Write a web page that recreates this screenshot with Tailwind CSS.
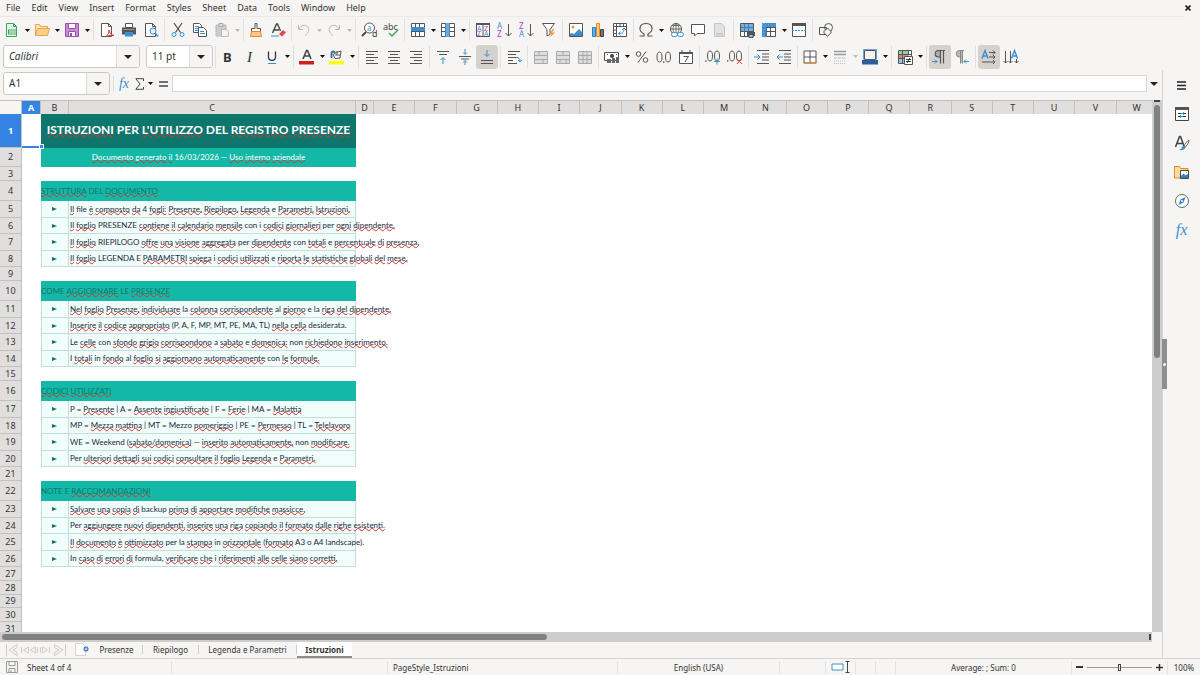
<!DOCTYPE html>
<html lang="en">
  <head>
    <meta charset="UTF-8" />
    <meta name="viewport" content="width=device-width, initial-scale=1.0" />
    <title>Registro presenze - Istruzioni</title>
    <script src="https://cdn.jsdelivr.net/npm/@tailwindcss/browser@4"></script>
  </head>
  <body class="flex h-screen flex-col overflow-hidden bg-[#f6f5f4] font-['Noto_Sans',sans-serif] text-[9px] text-[#333]">
    <!-- Menu bar -->
    <nav class="mr-4 flex h-[17px] shrink-0 items-center gap-[11px] border-b border-[#ebe9e7] pl-[6px]">
      <a href="#">File</a>
      <a href="#">Edit</a>
      <a href="#">View</a>
      <a href="#">Insert</a>
      <a href="#">Format</a>
      <a href="#">Styles</a>
      <a href="#">Sheet</a>
      <a href="#">Data</a>
      <a href="#">Tools</a>
      <a href="#">Window</a>
      <a href="#">Help</a>
      <button class="-mr-3 ml-auto grid size-4 place-items-center" aria-label="Close document">
        <svg class="size-[6px]" viewBox="0 0 6 6" stroke="#222" stroke-width="1.6"><path d="M.5.5l5 5M5.5.5l-5 5" /></svg>
      </button>
    </nav>

    <!-- Standard toolbar -->
    <div id="standard" class="flex h-[26px] shrink-0 items-center pl-px" role="toolbar" aria-label="Standard"></div>

    <!-- Formatting toolbar -->
    <div class="flex h-[27px] shrink-0 items-center pl-[3px]" role="toolbar" aria-label="Formatting">
      <div class="mr-[6px] flex h-[23px] w-[137px] overflow-hidden rounded-[3px] border border-[#cdc7c2] bg-white">
        <input class="min-w-0 flex-1 px-[5px] text-[10px] italic outline-none" value="Calibri" aria-label="Font name" />
        <button class="grid w-[23px] place-items-center border-l border-[#dcd8d4] bg-[#f6f5f4]" aria-label="Font list">
          <svg class="h-[4px] w-[8px]" viewBox="0 0 8 4"><path d="M0 0h8L4 4z" fill="#222" /></svg>
        </button>
      </div>
      <div class="flex h-[23px] w-[67px] overflow-hidden rounded-[3px] border border-[#cdc7c2] bg-white">
        <input class="min-w-0 flex-1 px-[5px] text-[10px] outline-none" value="11 pt" aria-label="Font size" />
        <button class="grid w-[23px] place-items-center border-l border-[#dcd8d4] bg-[#f6f5f4]" aria-label="Font size list">
          <svg class="h-[4px] w-[8px]" viewBox="0 0 8 4"><path d="M0 0h8L4 4z" fill="#222" /></svg>
        </button>
      </div>
      <div id="formatting" class="flex items-center"></div>
    </div>

    <div class="flex min-h-0 flex-1">
      <main class="flex min-w-0 flex-1 flex-col">
        <!-- Formula bar -->
        <div class="flex h-[30px] shrink-0 items-center pb-[3px] pl-[3px]">
          <div class="flex h-[23px] w-[107px] overflow-hidden rounded-[3px] border border-[#cdc7c2] bg-white">
            <input class="min-w-0 flex-1 px-[5px] text-[10px] outline-none" value="A1" aria-label="Name box" />
            <button class="grid w-[23px] place-items-center border-l border-[#dcd8d4] bg-[#f6f5f4]" aria-label="Cell ranges">
              <svg class="h-[4px] w-[8px]" viewBox="0 0 8 4"><path d="M0 0h8L4 4z" fill="#222" /></svg>
            </button>
          </div>
          <div class="ml-[3px] h-4 w-[3px] border-l border-[#dedbd8]"></div>
          <button class="w-[16px] text-center font-['Liberation_Serif',serif] text-[14px] leading-4 text-[#3a8fd0] italic" aria-label="Function wizard">fx</button>
          <button class="grid h-6 w-[14px] place-items-center" aria-label="Select function">
            <svg class="h-3 w-[9px]" viewBox="0 0 9 12" fill="none" stroke="#444"><path d="M8.500 3V.7H.8L5 6 .8 11.300h7.700V9" /></svg>
          </button>
          <button class="grid h-6 w-2 place-items-center" aria-label="Function list">
            <svg class="h-[3px] w-[5px]" viewBox="0 0 5 3"><path d="M0 0h5L2.500 3z" fill="#111" /></svg>
          </button>
          <button class="grid h-6 w-[18px] place-items-center" aria-label="Formula">
            <svg class="h-[6px] w-[9px]" viewBox="0 0 9 6" stroke="#444" stroke-width="1.400"><path d="M0 1h9M0 5h9" /></svg>
          </button>
          <input class="h-[17px] min-w-0 flex-1 border border-[#dad6d2] bg-white px-1 text-[10px] outline-none" aria-label="Input line" />
          <button class="-ml-px mr-px grid w-[15px] place-items-center" aria-label="Expand formula bar">
            <svg class="h-[4px] w-[8px]" viewBox="0 0 8 4"><path d="M0 0h8L4 4z" fill="#222" /></svg>
          </button>
        </div>

        <!-- Sheet -->
        <div class="flex min-h-0 flex-1">
          <div class="min-w-0 flex-1 overflow-hidden bg-white">
            <table class="w-[calc(100%+6px)] table-fixed border-separate border-spacing-0 [&_u]:decoration-[#d8302a] [&_u]:decoration-wavy [&_u]:decoration-1 [&_u]:underline-offset-[-1px] [&_u]:[text-decoration-skip-ink:none]">
              <thead>
                <tr id="columns" class="h-[14px]"></tr>
              </thead>
              <tbody id="rows"></tbody>
            </table>
          </div>
          <div class="w-[10px] shrink-0 bg-[#cdcdcd] px-[2px]">
            <div class="mb-[3px] h-[2px] bg-[#444]"></div>
            <div class="h-[47.500%] rounded-full bg-[#7f8180]"></div>
          </div>
        </div>
        <div class="mr-[10px] flex h-[10px] shrink-0 items-center justify-between bg-[#cdcdcd] pl-[2px]">
          <div class="h-[6px] w-[47.400%] rounded-full bg-[#7f8180]"></div>
          <div class="mr-[1px] h-[6px] w-[2px] bg-[#444]"></div>
        </div>

        <!-- Sheet tabs -->
        <div class="flex h-[16px] shrink-0 items-start text-[8px]">
          <svg class="mt-[2px] ml-[6px] h-[12px] w-[60px]" viewBox="0 0 60 12" fill="none" stroke="#cfccc9">
            <path d="M.5 0v12M11 .5L3 6l8 5.500M11 .5v3L7 6l4 2.500v3M15.500 3v6M22.500 3l-5 3 5 3zM29.500 3l-5 3 5 3zM31.500 3v6M36.500 3l5 3-5 3zM34.500 3v6M43.500 3v6M48.500 .5L57 6l-8.500 5.500M48.500 .5v3L53 6l-4.500 2.500v3M59.500 0v12" />
          </svg>
          <button class="ml-[8px] grid h-[15px] w-[15px] place-items-center" aria-label="Add sheet">
            <svg class="h-[13px] w-[14px]" viewBox="0 0 14 13"><path d="M.5.500h7l3 3v9H.5z" fill="#fff" stroke="#d6d3d0" /><circle cx="11" cy="6" r="2.500" fill="#3273bf" /><path d="M11 4.500v3M9.500 6h3" stroke="#fff" stroke-width=".8" /></svg>
          </button>
          <a href="#" class="mt-[3px] ml-[2px] w-[52px] border-r border-[#cfccc9] text-center leading-[9px]">Presenze</a>
          <a href="#" class="mt-[3px] w-[56px] border-r border-[#cfccc9] text-center leading-[9px]">Riepilogo</a>
          <a href="#" class="mt-[3px] w-[98px] border-r border-[#cfccc9] text-center leading-[9px]">Legenda e Parametri</a>
          <a href="#" class="h-full w-[55px] border-b-2 border-[#8b8d8c] bg-white pt-[3px] text-center leading-[9px] font-bold" aria-current="page">Istruzioni</a>
        </div>
      </main>

      <!-- Sidebar -->
      <aside class="relative flex w-[38px] shrink-0 flex-col items-center gap-[5px] border-l border-[#d6d3d0] pt-[3px]">
        <button class="absolute top-[269px] -left-px grid h-[50px] w-[5px] place-items-center bg-[#8d8f8e]" aria-label="Collapse sidebar">
          <span class="size-[3px] rounded-full bg-white"></span>
        </button>
        <button class="grid size-6 place-items-center" aria-label="Sidebar settings">
          <svg class="h-[9px] w-[9px]" viewBox="0 0 9 9" stroke="#222" stroke-width="1.300"><path d="M0 1h9M0 4.500h9M0 8h9" /></svg>
        </button>
        <button class="grid size-6 place-items-center" aria-label="Properties">
          <svg class="size-4" viewBox="0 0 16 16" fill="none"><path d="M1.500 1.500h13v13h-13z" fill="#fff" stroke="#444" /><path d="M1 1h14v3H1z" fill="#555" /><path d="M4 7.500h3M9 7.500h3M4 10.500h2M8 10.500h4" stroke="#333" /><path d="M7 7.500h3M6 10.500h3M9.500 6v3M6.500 9v3" stroke="#3a8fd0" /></svg>
        </button>
        <button class="grid size-6 place-items-center" aria-label="Styles">
          <svg class="size-4" viewBox="0 0 16 16" fill="none"><path d="M1.500 12L5.500 1.500h1L10 11M3 8.500h6" stroke="#444" stroke-width="1.500" /><path d="M15 5c-2 1-4 4-5 6l1.500 1C13 10 15 8 15 5z" fill="#fff" stroke="#666" /><path d="M10.500 11c-2-.5-3 1-3 2.500L5 15c3 .5 6 0 6.500-3z" fill="#3a8fd0" /></svg>
        </button>
        <button class="grid size-6 place-items-center" aria-label="Gallery">
          <svg class="size-4" viewBox="0 0 16 16" fill="none"><path d="M.5 14V2.500h5l1 2H14V14z" fill="#fbd9a5" stroke="#e58a25" /><path d="M6.500 6.500h8v8h-8z" fill="#fff" stroke="#444" /><path d="M7 14v-2l2.500-2.500 2 2L13 10l1 1v3z" fill="#2f7fc9" /><path d="M12 8h1v1h-1z" fill="#e58a25" /></svg>
        </button>
        <button class="grid size-6 place-items-center" aria-label="Navigator">
          <svg class="size-4" viewBox="0 0 16 16" fill="none"><circle cx="8" cy="8" r="6.500" fill="#fff" stroke="#666" /><path d="M11.500 4L9.500 9.500 4.500 12 6.500 6.500z" fill="#2f7fc9" /><circle cx="8" cy="8" r="1" fill="#fff" /></svg>
        </button>
        <button class="size-6 font-['Liberation_Serif',serif] text-[16px] leading-5 text-[#3a8fd0] italic" aria-label="Functions">fx</button>
      </aside>
    </div>

    <!-- Status bar -->
    <footer class="flex h-[17px] shrink-0 items-center border-t border-[#d6d3d0] text-[8px] leading-[13px] [&>div]:h-[13px] [&>div+div]:border-l [&>div+div]:border-[#e4e1de]">
      <div class="flex w-[171px] items-center">
        <svg class="mr-[9px] ml-[6px] size-3" viewBox="0 0 12 12" fill="none" stroke="#999"><path d="M.5.500h11v11H.5zM3 .5v4h6v-4M3 11.500v-4h6v4M5 9v2" /></svg>
        Sheet 4 of 4
      </div>
      <div class="w-[216px]"></div>
      <div class="w-[230px] pl-[5px]">PageStyle_Istruzioni</div>
      <div class="w-[162px] text-center">English (USA)</div>
      <div class="w-[46px]"></div>
      <div class="flex w-[30px] items-center justify-center">
        <svg class="h-[12px] w-[20px]" viewBox="0 0 20 12" fill="none"><path d="M1 3h11v6H1z" fill="#fff" stroke="#3f91c4" /><path d="M14.500.5h4M14.500 11.500h4M16.500.5v11" stroke="#444" /></svg>
      </div>
      <div class="w-[20px]"></div>
      <div class="w-[20px]"></div>
      <div class="min-w-0 flex-1 text-center">Average: ; Sum: 0</div>
      <div class="flex w-[96px] items-center justify-center gap-[3px]">
        <button class="grid size-[9px] place-items-center" aria-label="Zoom out"><span class="h-[2px] w-[7px] bg-[#333]"></span></button>
        <input type="range" class="h-[9px] w-[65px] appearance-none bg-[linear-gradient(#999,#999)] bg-[length:100%_1px] bg-center bg-no-repeat [&::-webkit-slider-thumb]:h-[7px] [&::-webkit-slider-thumb]:w-[3px] [&::-webkit-slider-thumb]:appearance-none [&::-webkit-slider-thumb]:border [&::-webkit-slider-thumb]:border-[#444] [&::-webkit-slider-thumb]:bg-[#eee]" aria-label="Zoom" />
        <button class="grid size-[9px] place-items-center" aria-label="Zoom in">
          <svg class="size-[7px]" viewBox="0 0 7 7" stroke="#333" stroke-width="1.500"><path d="M0 3.500h7M3.500 0v7" /></svg>
        </button>
      </div>
      <div class="w-[33px] text-center">100%</div>
    </footer>

    <script>
      const dark = 'stroke="#555"';
      const blue = 'stroke="#3a8fd0"';
      const grey = 'stroke="#bbb"';
      const page = '<path d="M2.500 1.500h7l3 3v10h-10z" fill="#fff" stroke="#555"/><path d="M9.500 1.500v3h3" stroke="#555"/>';
      const grid = '<path d="M1.500 1.500h13v13h-13z" fill="#fff"/><path d="M1.500 1.500h13v13h-13zM1.500 5.500h13M1.500 9.500h13M5.500 1.500v13M9.500 1.500v13" stroke="#555"/>';
      const letter = (x, y, size, color, t) =>
        `<text x="${x}" y="${y}" font-size="${size}" fill="${color}" font-family="Noto Sans">${t}</text>`;

      // "|" and "¦" are separators, "v" a drop-down arrow, "x" a disabled arrow
      const standard = [
        ["New", '<path d="M2.500 1.500h7l3 3v10h-10z" fill="#e6f5ea" stroke="#3aa757"/><path d="M9.500 1.500v3h3" stroke="#3aa757"/><path d="M4 7.500h9v5H4z" fill="#3aa757"/><path d="M5 9h7M5 11h7" stroke="#fff"/>'], "v",
        ["Open", '<path d="M1.500 13.500v-11h4l1 2h7v2" fill="#fde3b8" stroke="#e8a44a"/><path d="M1.500 13.500l2-7h12l-2 7z" fill="#fbd08b" stroke="#e8a44a"/>'], "v",
        ["Save", '<path d="M1.500 1.500h13v13h-13z" fill="#c88bd6" stroke="#9a4fb0"/><path d="M4.500 1.500h7v5h-7z" fill="#fff" stroke="#9a4fb0"/><path d="M4.500 9.500h7v5h-7z" fill="#fff" stroke="#9a4fb0"/><path d="M6 11h2v3H6z" fill="#9a4fb0"/>'], "v", "|",
        ["Export as PDF", page + '<path d="M7 14.500c2-1.500 3-3.500 3-6.500.5 3 2 5 5 5.500-3-.5-5 0-8 1z" fill="#fff" stroke="#d9383c"/>'],
        ["Print", '<path d="M4.500 1.500h7v4h-7z" fill="#fff" stroke="#555"/><path d="M1 5.500h14v7H1z" fill="#555"/><path d="M4 10h8v4.500H4z" fill="#3a8fd0"/><path d="M2.500 7.500h11" stroke="#999"/>'],
        ["Print preview", page + '<circle cx="10" cy="9" r="3" fill="#e4f1fb" stroke="#3a8fd0"/><path d="M12 11l3 3.500" stroke="#3a8fd0" stroke-width="1.500"/>'], "|",
        ["Cut", `<path d="M4 1l6.500 9.500M12 1L5.500 10.500" ${dark} stroke-width="1.300"/><circle cx="4" cy="12.500" r="2" ${blue}/><circle cx="12" cy="12.500" r="2" ${blue}/>`],
        ["Copy", '<path d="M1.500 1.500h6l2 2v7h-8z" fill="#fff" stroke="#555"/><path d="M6.500 5.500h5l3 3v6h-8z" fill="#fff" stroke="#555"/><path d="M3 4.500h4M3 6.500h3M3 8.500h3M8 9.500h4M8 11.500h5" stroke="#3a8fd0"/>'],
        ["Paste", '<path d="M2 3h10v11H2z" fill="#ccc" stroke="#bbb"/><path d="M5 1.500h4v3H5z" fill="#ddd" stroke="#aaa"/><path d="M7.500 7.500h5l2 2v5h-7z" fill="#f4f4f4" stroke="#bbb"/>'], "x", "¦",
        ["Clone formatting", '<path d="M7 1.500h2v5h3.500v3h-9v-3H7z" fill="#fff" stroke="#555"/><path d="M3.500 9.500h9l1 5h-11z" fill="#fbc98b" stroke="#e58a25"/>'],
        ["Clear formatting", '<path d="M2.500 11L6.500 2h1l3 7M4 8h5" stroke="#444" stroke-width="1.400"/><path d="M9 12l4-4 3 2.500-4 4z" fill="#e04a4a"/><path d="M1 14h8" stroke="#3a8fd0"/>'], "¦",
        ["Undo", `<path d="M2.500 3v4.500H7M3 7c2-4 6-5 9-2 2 3 0 6-3 9" ${grey}/>`], "x",
        ["Redo", `<path d="M13.500 3v4.500H9M13 7c-2-4-6-5-9-2-2 3 0 6 3 9" ${grey}/>`], "x", "|",
        ["Find and replace", `<circle cx="8.500" cy="6" r="5" fill="#fff" ${dark}/><path d="M5 10l-4 4" stroke="#444" stroke-width="1.800"/>` + letter(6, 9, 8, "#3a8fd0", "a") + letter(11, 15, 9, "#444", "d")],
        ["Spelling", letter(0, 8, 9, "#444", "abc") + '<path d="M6 11l3 3 6-6" stroke="#35a85a" stroke-width="1.400"/>'], "|",
        ["Row", grid + '<path d="M1 5h14v4H1z" fill="#3a8fd0"/>'], "v",
        ["Column", grid + '<path d="M5.500 1h4v14h-4z" fill="#62b0ea"/>'], "v", "|",
        ["Sort", '<path d="M1.500 1.500h13v13h-13zM8 1.500v13" fill="#fff" stroke="#555"/><path d="M1 1h14v2H1z" fill="#555"/>' + letter(2, 9, 7, "#3a8fd0", "A") + letter(2, 14, 7, "#a33fb8", "Z") + letter(9, 9, 7, "#a33fb8", "Z") + letter(9, 14, 7, "#3a8fd0", "A")],
        ["Sort ascending", letter(0, 7, 8, "#3a8fd0", "A") + letter(0, 15, 8, "#a33fb8", "Z") + `<path d="M11.500 2v12M8.500 11l3 3 3-3" ${dark}/>`],
        ["Sort descending", letter(0, 7, 8, "#a33fb8", "Z") + letter(0, 15, 8, "#3a8fd0", "A") + `<path d="M11.500 2v12M8.500 11l3 3 3-3" ${dark}/>`],
        ["AutoFilter", `<path d="M1.500 1.500h12L9 7.500v5l-3 1.500V7.500z" fill="#fff" ${dark}/><path d="M12 7l-4 5h2.500L9 15.500l5-5h-3L13.500 7z" fill="#f0983a"/>`], "|",
        ["Insert image", '<path d="M1.500 1.500h13v13h-13z" fill="#fff" stroke="#555"/><circle cx="5" cy="5" r="1.500" fill="#f0983a"/><path d="M2 14v-2l2-1 2 1 5-5 3 3v4z" fill="#3a8fd0"/>'],
        ["Insert chart", '<path d="M2.500 5.500h3v9h-3z" fill="#62b0ea" stroke="#2f7fc9"/><path d="M6.500 1.500h3v13h-3z" fill="#fbc98b" stroke="#e58a25"/><path d="M10.500 7.500h3v7h-3z" fill="#777" stroke="#444"/>'],
        ["Insert pivot table", '<path d="M1.500 1.500h13v13h-13z" fill="#fff" stroke="#555"/><path d="M1.500 4.500h13M4.500 1.500v13M8 1.500v3M11.500 1.500v3M1.500 8h3M1.500 11.500h3" stroke="#555"/><path d="M7 11.500c4 0 5-1 5-5M10 8l2-2 2 2M8.500 9.500l-2 2 2 2" stroke="#3a8fd0"/>'], "¦",
        ["Special character", `<path d="M1.500 14H6v-2C-1 8 2 1.500 8 1.500s9 6.500 2 10.500v2h4.500" ${dark} stroke-width="1.200"/>`], "v",
        ["Hyperlink", `<circle cx="8" cy="7" r="5.500" ${dark}/><path d="M2.500 7h11M8 1.500v11M4 3.500h8M8 1.500c-4 3-4 8 0 11M8 1.500c4 3 4 8 0 11" ${dark} stroke-width=".8"/><rect x="3.500" y="10.500" width="6" height="4" rx="2" fill="#fff" ${blue}/><rect x="9.500" y="10.500" width="6" height="4" rx="2" fill="#fff" ${blue}/>`],
        ["Comment", `<path d="M1.500 2.500h13v9H7L4.500 14v-2.500h-3z" fill="#fff" ${dark}/>`],
        ["Headers and footers", '<path d="M2.500 1.500h7l3 3v10h-10z" fill="#e2e2e2" stroke="#c4c4c4"/><path d="M4 11.500h7M4 13h7" stroke="#c4c4c4"/>'], "|",
        ["Define print area", grid + '<path d="M2 2h12v7H2z" fill="#3a8fd0" fill-opacity=".7"/><path d="M8 10h8v4H8z" fill="#555"/><path d="M10 12.500h4v3h-4z" fill="#8cc6f2" stroke="#555"/>'],
        ["Freeze", grid + '<path d="M1 1h14v4H5.500v10H1z" fill="#3a8fd0"/><path d="M3 1v13M1 3h13" stroke="#9bd" stroke-dasharray="1 2"/>'], "v",
        ["Split window", `<path d="M1.500 1.500h13v13h-13z" fill="#fff" ${dark}/><path d="M1 1h14v3H1z" fill="#555"/><path d="M1 8.500h14" ${blue} stroke-dasharray="2 1"/>`], "|",
        ["Draw functions", `<circle cx="10.500" cy="5.500" r="4" ${dark}/><path d="M1.500 5.500h7v7h-7z" ${dark}/><path d="M9.500 6l4 4-4 4.500-4-4.500z" fill="#f6f5f4" ${dark}/>`],
      ];

      const pilcrow = "M13 1.500H6.500a3 3 0 0 0 0 6.500H8M8.500 1.500v13M11.500 1.500v13";
      const lines = (d) => `<path d="${d}" ${dark} stroke-width="1.200"/>`;
      const merge = (d) => `<path d="M1.500 2.500h13v12h-13z" fill="#ddd"/><path d="M1.500 2.500h13v12h-13zM1.500 6.500h13M1.500 10.500h13${d}" stroke="#aaa"/>`;
      const formatting = [
        "¦",
        ["Bold", '<text x="3" y="13" font-size="13" font-weight="700" fill="#333" font-family="Noto Sans">B</text>'],
        ["Italic", '<text x="5" y="13" font-size="15" font-style="italic" fill="#333" font-family="Liberation Serif">I</text>'],
        ["Underline", '<path d="M4.500 2.500V8c0 4.500 7 4.500 7 0V2.500" stroke="#333" stroke-width="1.300"/><path d="M4 14.500h8" stroke="#3a8fd0"/>'], "v", "|",
        ["Font color", '<path d="M4 10L7.500 1.500h1L12 10M5.500 7h5" stroke="#444" stroke-width="1.600"/><path d="M0 12h15v3.500H0z" fill="#c9211e"/>'], "v",
        ["Background color", '<path d="M2.500 9V4c0-2 3-2 3.500 0" stroke="#2f6fa8" stroke-width="1.800"/><path d="M7.500 3.500L12 2l-1 7-5 .5-2-4z" fill="#fff" stroke="#555"/><path d="M8 2v4M6 6h5" stroke="#555"/><path d="M0 12h15v3.500H0z" fill="#ff0"/>'], "v", "|",
        ["Align left", lines("M2 2.500h12M2 5.500h8M2 8.500h12M2 11.500h8M2 14.500h12")],
        ["Center", lines("M2 2.500h12M4 5.500h8M2 8.500h12M4 11.500h8M2 14.500h12")],
        ["Align right", lines("M2 2.500h12M6 5.500h8M2 8.500h12M6 11.500h8M2 14.500h12")], "|",
        ["Align top", lines("M2 2.500h12M4 5.500h8") + `<path d="M8 15V9M5.500 11L8 8.500l2.500 2.500" ${blue}/>`],
        ["Center vertically", lines("M2 7.500h12M4 10h8") + `<path d="M8 0v5M6 3.500l2 2 2-2M8 16v-4M6 13.500l2-2 2 2" ${blue}/>`],
        ["Align bottom", lines("M2 11.500h12M2 14.500h12") + `<path d="M8 1v6M5.500 5L8 7.500 10.500 5" ${blue}/>`, 1], "|",
        ["Wrap text", lines("M2 2.500h12M2 5.500h8M2 8.500h10M2 11.500h5M2 14.500h9") + `<path d="M10 8.500c3 0 4 1 4 4M12 11l2 2 2-2" ${blue}/>`], "|",
        ["Merge and center", merge("M6 2.500v4M10 10.500v4")],
        ["Merge cells", merge("M8 2.500v4M5 10.500v4M11 10.500v4")],
        ["Split cells", merge("M6 2.500v12M10 2.500v12")], "|",
        ["Currency", '<path d="M.5 3.500h14v8H.5z" fill="#fff" stroke="#555"/><circle cx="8" cy="7" r="2" fill="#444"/><path d="M3 5.500h1M12 5.500h1" stroke="#555"/><path d="M3 10h4v4H3zM8 9h3v5H8zM12 8h3v6h-3z" fill="#666"/>'], "v",
        ["Percent", `<circle cx="4.500" cy="5" r="2.300" ${dark}/><circle cx="11.500" cy="11" r="2.300" ${dark}/><path d="M12 2.500L4 13.500" ${dark}/>`],
        ["Number", `<ellipse cx="3.500" cy="8" rx="2.500" ry="5" ${dark}/><ellipse cx="12" cy="8" rx="2.500" ry="5" ${dark}/><path d="M7.800 12v2" ${dark}/>`],
        ["Date", `<path d="M1.500 3.500h13v11h-13z" fill="#fff" ${dark}/><path d="M1 3h14v2H1zM3.500 1h1v3h-1zM11.500 1h1v3h-1z" fill="#555"/><path d="M5.500 7.500h5L7 13" ${dark}/>`], "|",
        ["Add decimal place", `<ellipse cx="5" cy="7" rx="2.500" ry="5" ${dark}/><ellipse cx="12" cy="7" rx="2.500" ry="5" ${dark}/><path d="M.8 11v2" ${dark}/><path d="M12 9.500v6M9 12.500h6" ${blue}/>`],
        ["Delete decimal place", `<ellipse cx="5" cy="7" rx="2.500" ry="5" ${dark}/><ellipse cx="12" cy="7" rx="2.500" ry="5" ${dark}/><path d="M.8 11v2" ${dark}/><path d="M10 10l5 5M15 10l-5 5" stroke="#e03c3c"/>`], "|",
        ["Increase indent", lines("M3 1.500h12M8 5h7M8 8h7M8 11h7M3 14.500h12") + `<path d="M0 8h6M3.500 5.500L6 8l-2.500 2.500" ${blue}/>`],
        ["Decrease indent", lines("M3 1.500h12M8 5h7M8 8h7M8 11h7M3 14.500h12") + `<path d="M1 8h6M3.500 5.500L1 8l2.500 2.500" ${blue}/>`], "¦",
        ["Borders", `<path d="M2 2h12v12H2zM8 2v12M2 8h12" fill="#fff" ${dark}/><path d="M1.500 14h13" stroke="#e58a25"/>`], "v",
        ["Border style", '<path d="M2 2.500h12M2 5.500h12" stroke="#999" stroke-width="1.500"/><path d="M2 9h12" stroke="#bbb" stroke-dasharray="3 1"/><path d="M2 12h12M2 14.500h12" stroke="#bbb" stroke-dasharray="1 1"/>'], "x",
        ["Border color", '<path d="M2.500 1.500h11v9h-11z" fill="#f4f4f4" stroke="#555"/><path d="M1.500 10.500V.5h13v10" stroke="#62a5de"/><path d="M0 11h16v4.500H0z" fill="#2a5f9e"/>'], "v", "|",
        ["Conditional formatting", '<path d="M1.500 1.500h13v13h-13z" fill="#fff" stroke="#555"/><path d="M2 2h9v3H2z" fill="#8fd19e"/><path d="M2 6h9v3H2z" fill="#e88080"/><path d="M2 10h5v4H2z" fill="#8cc6f2"/><path d="M1.500 5.500h13M1.500 9.500h6M5.500 1.500v13M11.500 1.500v5" stroke="#555"/><path d="M7.500 7.500h8v8h-8z" fill="#fff" stroke="#555"/><path d="M9 10.500h5M9 12.500h5M13 9l-3 5" stroke="#333"/>'], "v", "|",
        ["Left-to-right", `<path d="M9 1.500H6.500a3 3 0 0 0 0 6.500H8z" fill="#aaa"/><path d="${pilcrow}" ${dark} stroke-width="1.200"/><path d="M0 12.500h5M3 10.500l2 2-2 2" ${blue}/>`, 1],
        ["Right-to-left", `<path d="M9 1.500H5.500a3 3 0 0 0 0 6.500H7v6h2z" fill="#bbb"/><path d="M10 1.500H5.500a3 3 0 0 0 0 6.500H7M6.500 1.500v13M8.500 1.500v13" stroke="#888"/><path d="M10 12.500h5M12 10.500l-2 2 2 2" ${blue}/>`], "|",
        ["Text left to right", '<path d="M1 9.500L4 1.500l3 8M2 7h4" stroke="#3a8fd0" stroke-width="1.400"/>' + `<path d="M8 3.500h6M12 1.500l2 2-2 2M8 8h6M12 6l2 2-2 2M1 13h13M12 11l2 2-2 2" ${dark}/>`, 1],
        ["Text top to bottom", '<path d="M8.500 9.500L11.500 1.500l3 8M9.500 7h4" stroke="#3a8fd0" stroke-width="1.400"/>' + `<path d="M2.500 2v12M.5 12l2 2 2-2M7.500 2v12M5.500 12l2 2 2-2M13.500 10v4M11.500 12l2 2 2-2" ${dark}/>`],
      ];

      const arrow = (color) =>
        `<button class="grid h-6 w-2 place-items-center" aria-label="More"><svg class="h-[3px] w-[5px]" viewBox="0 0 5 3"><path d="M0 0h5L2.500 3z" fill="${color}"/></svg></button>`;

      function toolbar(id, items) {
        document.getElementById(id).innerHTML = items
          .map((item) => {
            if (item === "|") return '<span class="mx-[2px] h-[22px] w-px bg-[#e2dfdc]"></span>';
            if (item === "¦") return '<span class="mr-px ml-[2px] h-[22px] w-px bg-[#e2dfdc]"></span>';
            if (item === "v") return arrow("#111");
            if (item === "x") return arrow("#bbb");
            const [label, icon, on] = item;
            const look = on ? "rounded-[3px] bg-[#d5d1cd]" : "";
            return `<button class="grid h-6 w-[22px] place-items-center ${look}" aria-label="${label}"><svg class="size-4 overflow-visible" viewBox="0 0 16 16" fill="none">${icon}</svg></button>`;
          })
          .join("");
      }
      toolbar("standard", standard);
      toolbar("formatting", formatting);

      // Column headings
      const widths = { "": 22, A: 19, B: 28, C: 287, D: 18 };
      document.getElementById("columns").innerHTML = ["", ..."ABCDEFGHIJKLMNOPQRSTUVW"]
        .map((c) => {
          const width = c in widths ? ` style="width:${widths[c]}px"` : "";
          const look = c === "A" ? "bg-[#3584e4] font-bold text-white" : c ? "bg-[#e1dfdd] font-normal" : "bg-[#f6f5f4]";
          return `<th class="h-[14px] border-t border-r border-[#c3c1bf] p-0 leading-[12px] ${look}"${width}>${c}</th>`;
        })
        .join("");

      // Rows: [kind, height, text]; "~" marks a word underlined by the spell checker
      const rows = [
        ["title", 34, "~ISTRUZIONI PER ~L'UTILIZZO DEL ~REGISTRO ~PRESENZE"],
        ["subtitle", 19, "~Documento ~generato ~il 16/03/2026 — ~Uso ~interno ~aziendale"],
        ["", 14],
        ["head", 20, "~STRUTTURA DEL ~DOCUMENTO"],
        ["item", 17, "~Il file ~è ~composto ~da 4 ~fogli: ~Presenze, ~Riepilogo, ~Legenda e ~Parametri, ~Istruzioni."],
        ["item", 16, "~Il ~foglio PRESENZE ~contiene ~il ~calendario ~mensile con i ~codici ~giornalieri per ~ogni ~dipendente."],
        ["item", 17, "~Il ~foglio RIEPILOGO ~offre ~una ~visione ~aggregata per ~dipendente con ~totali e ~percentuale ~di ~presenza."],
        ["item", 16, "~Il ~foglio LEGENDA E ~PARAMETRI ~spiega i ~codici ~utilizzati e ~riporta ~le ~statistiche ~globali ~del ~mese."],
        ["", 14],
        ["head", 20, "COME ~AGGIORNARE LE ~PRESENZE"],
        ["item", 17, "~Nel ~foglio ~Presenze, ~individuare la ~colonna ~corrispondente al ~giorno e la ~riga ~del ~dipendente."],
        ["item", 16, "~Inserire ~il ~codice ~appropriato (P, A, F, MP, MT, PE, MA, TL) ~nella ~cella desiderata."],
        ["item", 17, "Le ~celle con ~sfondo ~grigio ~corrispondono a ~sabato e ~domenica: non ~richiedono ~inserimento."],
        ["item", 16, "I ~totali in ~fondo al ~foglio ~si ~aggiornano ~automaticamente con ~le ~formule."],
        ["", 14],
        ["head", 20, "~CODICI ~UTILIZZATI"],
        ["item", 17, "P = ~Presente | A = ~Assente ~ingiustificato | F = ~Ferie | MA = ~Malattia"],
        ["item", 16, "MP = ~Mezza ~mattina | MT = Mezzo ~pomeriggio | PE = ~Permesso | TL = ~Telelavoro"],
        ["item", 17, "WE = Weekend (~sabato/domenica) — ~inserito ~automaticamente, non ~modificare."],
        ["item", 16, "Per ~ulteriori ~dettagli ~sui ~codici ~consultare ~il ~foglio ~Legenda e ~Parametri."],
        ["", 14],
        ["head", 20, "NOTE E ~RACCOMANDAZIONI"],
        ["item", 17, "~Salvare ~una ~copia ~di backup ~prima ~di ~apportare ~modifiche ~massicce."],
        ["item", 16, "Per ~aggiungere ~nuovi ~dipendenti, ~inserire ~una ~riga ~copiando ~il ~formato ~dalle ~righe ~esistenti."],
        ["item", 17, "~Il ~documento ~è ~ottimizzato per la ~stampa in ~orizzontale (~formato A3 o A4 landscape)."],
        ["item", 16, "In ~caso ~di ~errori ~di formula, ~verificare ~che i ~riferimenti ~alle ~celle ~siano ~corretti."],
        ["", 14], ["", 14], ["", 13], ["", 14], ["", 14],
      ];
      const spell = (text) => text.replace(/~([^\s(]+)/g, "<u>$1</u>");
      const cells = {
        "": () => '<td colspan="2"></td>',
        title: (t) => `<td colspan="2" class="bg-[#0f766e] p-0 pb-[3px] text-center font-['Lato',sans-serif] text-[12px] leading-4 font-bold whitespace-nowrap text-white">${t}</td>`,
        subtitle: (t) => `<td colspan="2" class="bg-[#14b8a6] p-0 pb-px text-center font-['Lato',sans-serif] text-[8px] leading-3 whitespace-nowrap text-white">${t}</td>`,
        head: (t) => `<td colspan="2" class="bg-[#14b8a6] p-0 font-['Lato',sans-serif] text-[8px] leading-3 whitespace-nowrap text-[#0f766e]">${t}</td>`,
        item: (t) => `<td class="border-r border-b border-l border-[#c5dedd] bg-[#f0fdfa] p-0 pr-[2px] text-center text-[#0f766e]"><svg class="mx-auto h-[4px] w-[5px]" viewBox="0 0 5 4"><path d="M0 0l5 2-5 2z" fill="#0f766e"/></svg></td>
          <td class="border-r border-b border-[#c5dedd] bg-[#f0fdfa] p-0 pb-px pl-px font-['Lato',sans-serif] text-[8px] leading-3 whitespace-nowrap text-[#1e293b]">${t}</td>`,
      };
      document.getElementById("rows").innerHTML = rows
        .map(([kind, height, text = ""], i) => {
          const active = i === 0;
          const th = active ? "bg-[#3584e4] font-bold text-white" : "bg-[#e1dfdd] font-normal";
          const first = active
            ? '<td class="relative border-b-2 border-[#3584e4] p-0"><span class="absolute -right-[3px] -bottom-[3px] size-[5px] border border-white bg-[#3584e4]"></span></td>'
            : "<td></td>";
          return `<tr style="height:${height}px"><th class="border-r border-b border-[#c3c1bf] p-0 leading-[12px] ${th}">${i + 1}</th>${first}${cells[kind](spell(text))}<td colspan="20"></td></tr>`;
        })
        .join("");
    </script>
  </body>
</html>
